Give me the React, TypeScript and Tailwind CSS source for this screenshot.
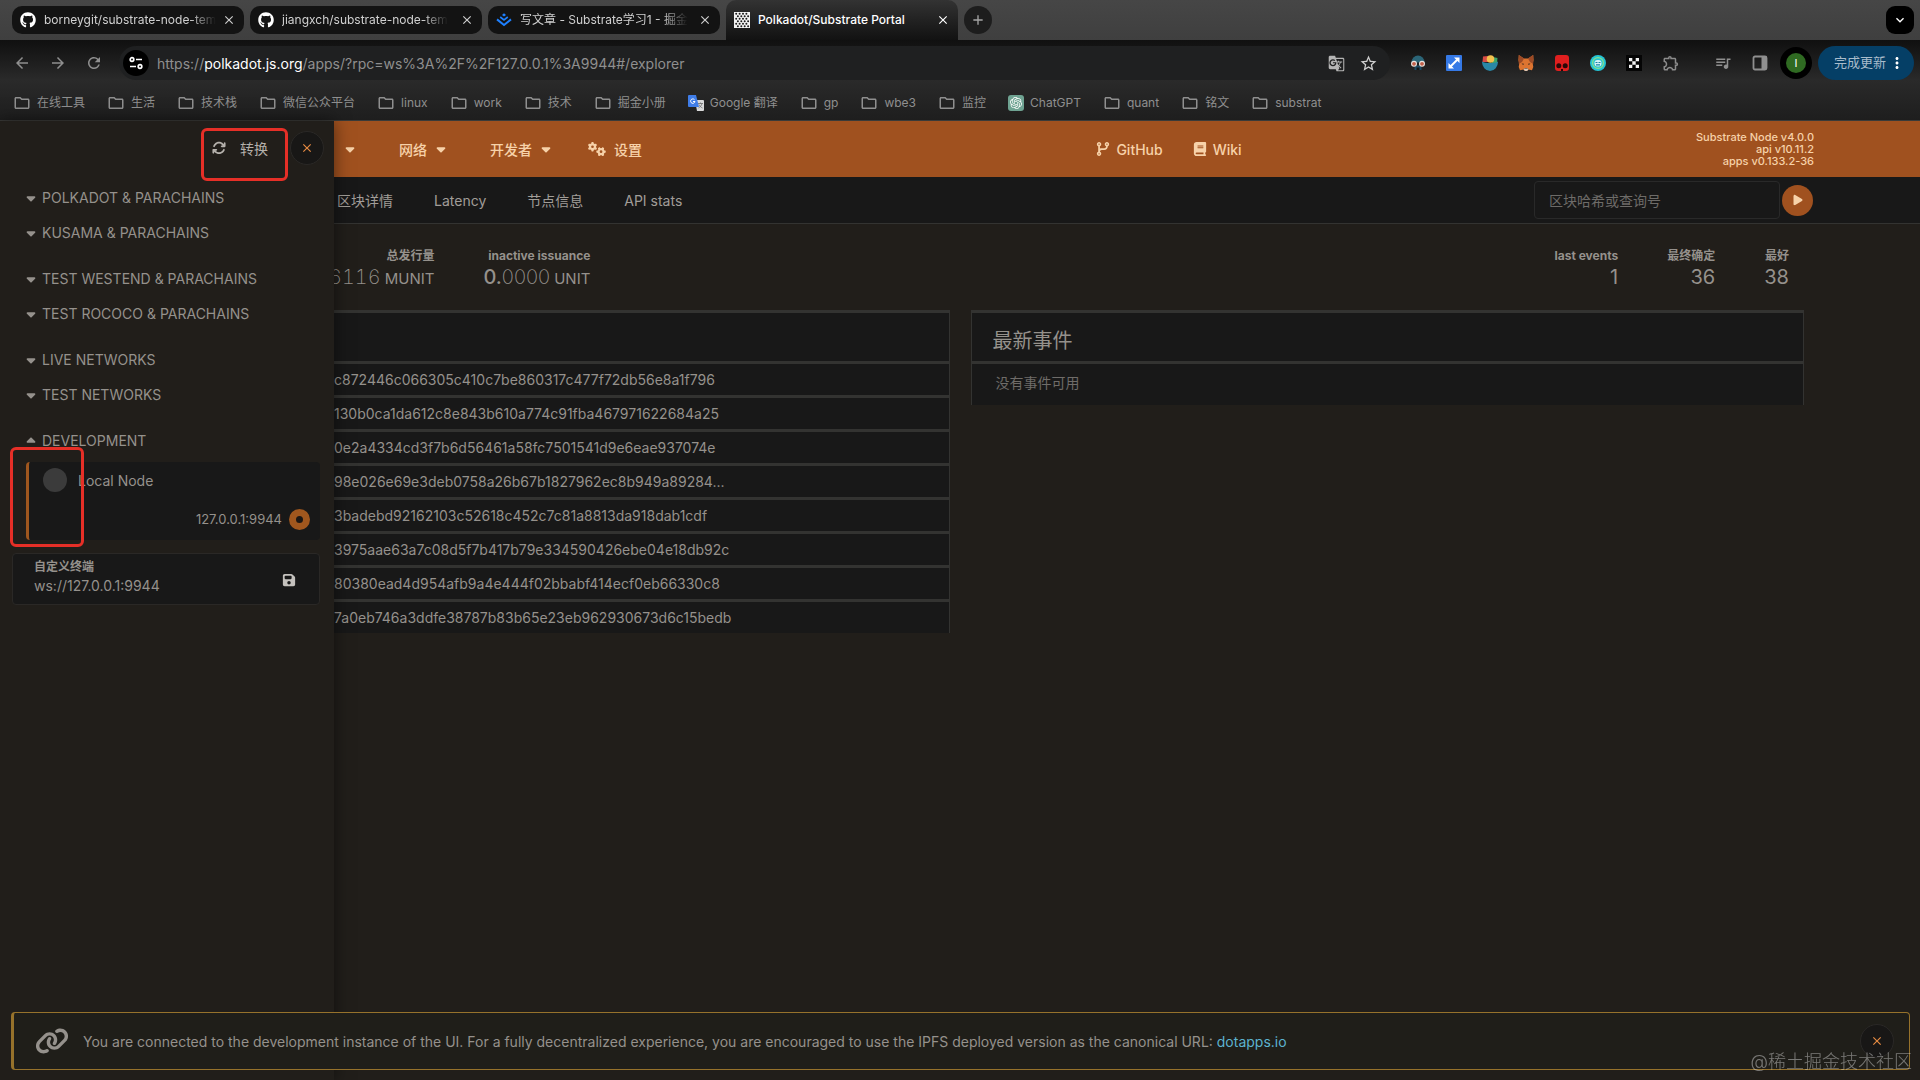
import type { ReactNode } from "react";
import {
  FaArrowsRotate,
  FaBook,
  FaCaretDown,
  FaCaretUp,
  FaCodeBranch,
  FaFloppyDisk,
  FaGears,
  FaGithub,
  FaLink,
  FaPlay,
} from "react-icons/fa6";
import {
  MdAdd,
  MdArrowBack,
  MdArrowForward,
  MdClose,
  MdGTranslate,
  MdKeyboardArrowDown,
  MdMoreVert,
  MdOutlineExtension,
  MdOutlineFolder,
  MdOutlineQueueMusic,
  MdOutlineStarBorder,
  MdRefresh,
} from "react-icons/md";
import { SiOpenai } from "react-icons/si";

const bookmarks = [
  { label: "在线工具" },
  { label: "生活" },
  { label: "技术栈" },
  { label: "微信公众平台" },
  { label: "linux" },
  { label: "work" },
  { label: "技术" },
  { label: "掘金小册" },
  { label: "Google 翻译", icon: "google" },
  { label: "gp" },
  { label: "wbe3" },
  { label: "监控" },
  { label: "ChatGPT", icon: "gpt" },
  { label: "quant" },
  { label: "铭文" },
  { label: "substrat" },
];

const networkGroups = [
  ["POLKADOT & PARACHAINS", "KUSAMA & PARACHAINS"],
  ["TEST WESTEND & PARACHAINS", "TEST ROCOCO & PARACHAINS"],
  ["LIVE NETWORKS", "TEST NETWORKS"],
];

const blockHashes = [
  "c872446c066305c410c7be860317c477f72db56e8a1f796",
  "130b0ca1da612c8e843b610a774c91fba467971622684a25",
  "0e2a4334cd3f7b6d56461a58fc7501541d9e6eae937074e",
  "98e026e69e3deb0758a26b67b1827962ec8b949a89284...",
  "3badebd92162103c52618c452c7c81a8813da918dab1cdf",
  "3975aae63a7c08d5f7b417b79e334590426ebe04e18db92c",
  "80380ead4d954afb9a4e444f02bbabf414ecf0eb66330c8",
  "7a0eb746a3ddfe38787b83b65e23eb962930673d6c15bedb",
];

function JuejinLogo() {
  return (
    <svg viewBox="0 0 16 16" className="h-4 w-4 shrink-0" fill="none" stroke="#1e80ff" strokeWidth="1.6">
      <path d="M8 1.2 10 2.9 8 4.5 6 2.9Z" fill="#1e80ff" stroke="none" />
      <path d="M4.2 5 8 8l3.8-3" />
      <path d="M1 7.4 8 13l7-5.6" strokeWidth="2" />
    </svg>
  );
}

function PortalLogo() {
  const dots: ReactNode[] = [];
  for (let row = 0; row < 6; row++) {
    for (let col = 0; col < 4; col++) {
      dots.push(
        <circle key={`${row}-${col}`} cx={2.2 + col * 3.4 + (row % 2) * 1.7} cy={1.8 + row * 2.5} r="1" fill="#1b1b1b" />
      );
    }
  }
  return (
    <svg viewBox="0 0 16 16" className="h-4 w-4 shrink-0">
      <rect width="16" height="16" fill="#f4f4f4" />
      {dots}
    </svg>
  );
}

function Tab({ icon, title, active }: { icon: ReactNode; title: string; active?: boolean }) {
  return (
    <div
      className={
        active
          ? "flex w-[232px] items-center rounded-t-[10px] bg-linear-to-b from-[#333333] to-[#121212] px-2 text-white"
          : "my-1.5 flex w-[232px] items-center rounded-[10px] bg-[#131313] px-2 text-[#d0d0d0]"
      }
    >
      {icon}
      <span
        className={
          active
            ? "ml-2 whitespace-nowrap font-medium"
            : "ml-2 whitespace-nowrap mask-r-from-85% mask-r-to-100%"
        }
      >
        {title}
      </span>
      <button aria-label="Close tab" className="ml-auto">
        <MdClose className="h-3.5 w-3.5" />
      </button>
    </div>
  );
}

function BookmarkIcon({ icon }: { icon?: string }) {
  if (icon === "google") {
    return (
      <svg viewBox="0 0 16 16" className="h-4 w-4">
        <path d="M7 5h8a1 1 0 0 1 1 1v9a1 1 0 0 1-1 1H9Z" fill="#d9d9d9" />
        <path d="M10 8.5h5M12.5 7.5v1M14 8.5c-.5 2-1.8 3.5-3.5 4.5M11 9.5c.6 1.5 2 2.8 3.5 3.5" stroke="#6b6b6b" strokeWidth=".8" fill="none" />
        <path d="M1 0h7l3 12H1a1 1 0 0 1-1-1V1a1 1 0 0 1 1-1Z" fill="#3f7de8" />
        <path d="M6.5 4.7A2.2 2.2 0 1 0 7 6.5H5" stroke="#fff" strokeWidth="1" fill="none" />
      </svg>
    );
  }
  if (icon === "gpt") {
    return (
      <span className="flex h-4 w-4 items-center justify-center rounded-[3px] bg-[#6fa392] text-white">
        <SiOpenai className="h-3 w-3" />
      </span>
    );
  }
  return <MdOutlineFolder className="h-[18px] w-[18px]" />;
}

function Extensions() {
  return (
    <div className="flex items-center gap-5">
      <svg viewBox="0 0 16 16" className="h-4 w-4">
        <path d="M1.5 7.5a6.5 7 0 0 1 13 0Z" fill="#2b6577" />
        <path d="M4.5 10.5h7V15h-7Z" fill="#1c4a63" />
        <path d="M6.5 12.5h3V15h-3Z" fill="#15181a" />
        <circle cx="4" cy="8.8" r="3" fill="#e9e4e0" />
        <circle cx="12" cy="8.8" r="3" fill="#e9e4e0" />
        <circle cx="4" cy="8.8" r="1.9" fill="#c1604a" />
        <circle cx="12" cy="8.8" r="1.9" fill="#c1604a" />
      </svg>
      <svg viewBox="0 0 16 16" className="h-4 w-4">
        <rect width="16" height="16" rx="1" fill="#3579e6" />
        <path d="M4.5 11.5 11.5 4.5" stroke="#fff" strokeWidth="2" />
        <path d="M8 2.5h5.5V8ZM2.5 8v5.5H8Z" fill="#fff" />
      </svg>
      <svg viewBox="0 0 16 16" className="h-4 w-4">
        <path d="M1 1.5 6 1v6H.5Z" fill="#d94c45" />
        <path d="m11 2 4.5 1-.5 5h-5Z" fill="#3ea66b" />
        <circle cx="8.5" cy="4" r="3.8" fill="#f2c14e" />
        <path d="M0 6.5c3 2 13 2 16 0A8 9.3 0 0 1 8 16 8 9.3 0 0 1 0 6.5Z" fill="#2a88a6" />
      </svg>
      <svg viewBox="0 0 16 16" className="h-4 w-4">
        <path d="M.8 0 6 3.5h4L15.2 0l.4 5-.8 4 .5 3-1.3 3.3-3.6-.8L9 16H7l-1.4-1.5-3.6.8L.7 12l.5-3-.8-4Z" fill="#dd7430" />
        <path d="m.8 0 5.2 3.5-2 3.5-3.2 2ZM15.2 0 10 3.5l2 3.5 3.2 2Z" fill="#9c4a26" />
        <path d="m3.5 8.5 2.5.3-.8 1.2ZM12.5 8.5l-2.5.3.8 1.2ZM6.5 13h3l-.5 1.5H7Z" fill="#2b2220" />
        <path d="m5.5 14.5 1-1h3l1 1L9 16H7Z" fill="#d8c4b4" />
      </svg>
      <svg viewBox="0 0 16 16" className="h-4 w-4">
        <rect x="1" width="14" height="16" rx="3" fill="#e01f1f" />
        <circle cx="4.8" cy="10.8" r="2.5" fill="#2a0808" />
        <circle cx="11.2" cy="10.8" r="2.5" fill="#2a0808" />
        <path d="M7 14h2v2H7Z" fill="#2a0808" />
      </svg>
      <svg viewBox="0 0 16 16" className="h-4 w-4">
        <circle cx="8" cy="8" r="8" fill="#25c4d4" />
        <circle cx="8" cy="8" r="5.4" fill="none" stroke="#8be08a" strokeWidth="1.2" />
        <rect x="4.5" y="5" width="7" height="6.5" rx="3" fill="#d4f1f6" />
        <path d="M5.5 7.5h2M8.5 7.5h2M6 9.8h4" stroke="#1786a5" strokeWidth="1.2" />
      </svg>
      <svg viewBox="0 0 16 16" className="h-4 w-4">
        <rect width="16" height="16" fill="#050505" />
        <path d="M3 3h3.3v3.3H3ZM9.7 3H13v3.3H9.7ZM6.3 6.3h3.4v3.4H6.3ZM3 9.7h3.3V13H3ZM9.7 9.7H13V13H9.7Z" fill="#f5f5f5" />
      </svg>
      <MdOutlineExtension className="h-[18px] w-[18px] text-[#8c8c8c]" />
    </div>
  );
}

function BrowserChrome() {
  return (
    <div className="text-[13px] text-[#8f8f8f]">
      <div className="flex h-10 items-stretch gap-1.5 bg-linear-to-b from-[#464646] to-[#3f3f3f] px-3 text-[12px]">
        <Tab icon={<FaGithub className="h-4 w-4 shrink-0 text-white" />} title="borneygit/substrate-node-tem" />
        <Tab icon={<FaGithub className="h-4 w-4 shrink-0 text-white" />} title="jiangxch/substrate-node-tem" />
        <Tab icon={<JuejinLogo />} title="写文章 - Substrate学习1 - 掘金" />
        <Tab icon={<PortalLogo />} title="Polkadot/Substrate Portal" active />
        <button aria-label="New tab" className="my-1.5 flex w-7 items-center justify-center rounded-full bg-[#1d1d1d] text-[#a5a5a5]">
          <MdAdd className="h-4 w-4" />
        </button>
        <button aria-label="Search tabs" className="my-1.5 -mr-1.5 ml-auto flex w-7 items-center justify-center rounded-[9px] bg-black text-white">
          <MdKeyboardArrowDown className="h-4 w-4" />
        </button>
      </div>

      <div className="bg-linear-to-b from-[#101010] via-[#2a2a2a] to-[#1e1e1e]">
        <div className="flex items-center py-1.5 pr-1.5 pl-[13px]">
          <button aria-label="Back"><MdArrowBack className="h-[18px] w-[18px]" /></button>
          <button aria-label="Forward" className="ml-[18px]"><MdArrowForward className="h-[18px] w-[18px]" /></button>
          <button aria-label="Reload" className="ml-[18px]"><MdRefresh className="h-[18px] w-[18px]" /></button>
          <div className="ml-4 flex h-[34px] flex-1 items-center rounded-full bg-[#1f2021] pr-3 pl-1">
            <span className="flex h-[26px] w-[26px] shrink-0 items-center justify-center rounded-full bg-black">
              <svg viewBox="0 0 14 14" className="h-3.5 w-3.5" fill="none" stroke="#fff" strokeWidth="1.7">
                <circle cx="3" cy="3.5" r="1.8" />
                <path d="M7 3.5h6M1 10.5h6" />
                <circle cx="11" cy="10.5" r="1.8" />
              </svg>
            </span>
            <div className="ml-2 flex-1 text-[14px] whitespace-nowrap">
              https://<span className="text-white">polkadot.js.org</span>
              /apps/?rpc=ws%3A%2F%2F127.0.0.1%3A9944#/explorer
            </div>
            <button aria-label="Translate"><MdGTranslate className="h-[17px] w-[17px] text-[#b5b5b5]" /></button>
            <button aria-label="Bookmark" className="ml-3.5"><MdOutlineStarBorder className="h-[19px] w-[19px] text-[#cfcfcf]" /></button>
          </div>
          <div className="mr-[34px] ml-5">
            <Extensions />
          </div>
          <MdOutlineQueueMusic className="h-[18px] w-[18px]" />
          <svg viewBox="0 0 16 16" className="ml-5 h-4 w-4">
            <rect x="1.5" y="1.5" width="13" height="13" rx="1.5" fill="none" stroke="currentColor" strokeWidth="1.8" />
            <path d="M9.5 2h5v12h-5Z" fill="currentColor" />
          </svg>
          <span className="ml-3 flex h-8 w-8 items-center justify-center rounded-full bg-black">
            <span className="flex h-5 w-5 items-center justify-center rounded-full bg-[#2f6a22] text-[11px] text-white">I</span>
          </span>
          <button className="ml-1.5 flex h-[34px] w-24 items-center justify-end gap-0.5 rounded-full bg-[#053f66] pr-2 text-[13px] text-[#a9bccb]">
            完成更新
            <MdMoreVert className="h-[18px] w-[18px] text-white" />
          </button>
        </div>
        <div className="flex h-[34px] items-center gap-[22px] px-[13px] text-[12px]">
          {bookmarks.map((b) => (
            <a key={b.label} href="#" className="flex items-center gap-1.5 whitespace-nowrap">
              <BookmarkIcon icon={b.icon} />
              {b.label}
            </a>
          ))}
        </div>
      </div>
    </div>
  );
}

function Sidebar() {
  return (
    <aside className="absolute inset-y-0 left-0 z-10 w-[334px] bg-[#211e1a] text-[14px] text-[#95918c] shadow-[0_0_16px_rgba(0,0,0,0.5)]">
      <div className="flex items-center justify-end gap-[22px] pt-2.5 pr-2.5">
        <button className="flex items-center gap-3.5 text-[#b5b1ac]">
          <FaArrowsRotate className="h-3.5 w-3.5" />
          转换
        </button>
        <button aria-label="Close" className="flex h-[34px] w-[34px] items-center justify-center rounded-full border border-[#2a2826] bg-[#181716] text-[#e78b42]">
          <MdClose className="h-3.5 w-3.5" />
        </button>
      </div>

      <div className="mt-[15px] flex flex-col gap-[11px]">
        {networkGroups.map((group) => (
          <div key={group[0]}>
            {group.map((name) => (
              <button key={name} className="flex h-[35px] items-center gap-[5px] pl-[25px]">
                <FaCaretDown className="w-3" />
                {name}
              </button>
            ))}
          </div>
        ))}
        <div>
          <button className="flex h-[35px] items-center gap-[5px] pl-[25px]">
            <FaCaretUp className="w-3" />
            DEVELOPMENT
          </button>
          <div className="mt-1 mr-3.5 ml-[26px] rounded-sm border-l-[3px] border-[#a0571e] bg-[#181818] pt-1.5 pr-2.5 pb-2.5 pl-3.5">
            <div className="flex items-center gap-[11px]">
              <span className="h-6 w-6 rounded-full bg-[#3b3b3b]" />
              Local Node
            </div>
            <label className="mt-[17px] flex items-center justify-end gap-[7px] text-[13px]">
              127.0.0.1:9944
              <input
                type="radio"
                defaultChecked
                className="h-[21px] w-[21px] appearance-none rounded-full border-[7px] border-[#a0571e] bg-[#1c1714]"
              />
            </label>
          </div>
        </div>
      </div>

      <div className="mt-[13px] mr-3.5 ml-3 flex items-center rounded-sm border border-[#2a2826] bg-[#181818] pt-1 pr-[23px] pb-2 pl-[21px]">
        <div className="min-w-0 flex-1">
          <label htmlFor="endpoint" className="block text-[12px] leading-[18px] font-bold">
            自定义终端
          </label>
          <input id="endpoint" defaultValue="ws://127.0.0.1:9944" className="block w-full bg-transparent leading-5" />
        </div>
        <button aria-label="Save endpoint" className="mt-1.5 text-[#c4c1bd]">
          <FaFloppyDisk className="h-3.5 w-3.5" />
        </button>
      </div>

      <div className="absolute top-[7px] left-[201px] h-[53px] w-[87px] rounded-md border-[3px] border-[#e62f27]" />
      <div className="absolute top-[326px] left-[10px] h-[100px] w-[74px] rounded-md border-[3px] border-[#e62f27]" />
    </aside>
  );
}

function TopBar() {
  return (
    <header className="flex h-14 items-center justify-between bg-[#a0511f] pr-[106px] pl-[344px] text-[14px] font-medium text-[#f7d2a9]">
      <nav className="flex items-center">
        <button aria-label="More"><FaCaretDown className="w-3" /></button>
        <button className="ml-[43px] flex items-center gap-2">
          网络 <FaCaretDown className="w-3" />
        </button>
        <button className="ml-[43px] flex items-center gap-2">
          开发者 <FaCaretDown className="w-3" />
        </button>
        <button className="ml-9 flex items-center gap-2">
          <FaGears className="h-4 w-[18px]" /> 设置
        </button>
      </nav>
      <div className="flex items-center gap-[30px]">
        <a href="#" className="flex items-center gap-1.5">
          <FaCodeBranch className="h-3.5 w-3.5" /> GitHub
        </a>
        <a href="#" className="flex items-center gap-1.5">
          <FaBook className="h-3.5 w-3.5" /> Wiki
        </a>
      </div>
      <div className="text-right text-[11px] leading-3">
        <div>Substrate Node v4.0.0</div>
        <div>api v10.11.2</div>
        <div>apps v0.133.2-36</div>
      </div>
    </header>
  );
}

function SubNav() {
  return (
    <div className="flex h-[47px] items-center border-b border-[#333331] bg-[#181818] pr-[107px] pl-[337px] text-[14px]">
      <nav className="flex flex-1 gap-[41px] text-[#a19d98]">
        <a href="#">区块详情</a>
        <a href="#">Latency</a>
        <a href="#">节点信息</a>
        <a href="#">API stats</a>
      </nav>
      <input
        aria-label="区块哈希或查询号"
        placeholder="区块哈希或查询号"
        className="h-[38px] w-[246px] rounded-sm border border-[#292929] bg-transparent px-3.5 placeholder:text-[#6d6b68]"
      />
      <button aria-label="Search" className="ml-0.5 flex h-[31px] w-[31px] items-center justify-center rounded-full bg-[#a0511f] text-[#f7d2a9]">
        <FaPlay className="h-3 w-3" />
      </button>
    </div>
  );
}

function Stat({ label, children }: { label: string; children: ReactNode }) {
  return (
    <div className="text-right">
      <div className="text-[12px] leading-4 font-bold">{label}</div>
      <div className="text-[20px] leading-[26px]">{children}</div>
    </div>
  );
}

function Summary() {
  return (
    <section className="flex justify-between pt-6 pr-[131px] pb-[18px] pl-[329px]">
      <div className="flex gap-[49px]">
        <Stat label="总发行量">
          <span className="font-extralight tabular-nums">6116</span>
          <span className="ml-1 text-[15px]">MUNIT</span>
        </Stat>
        <Stat label="inactive issuance">
          <span className="font-medium">0.</span>
          <span className="font-extralight">0000</span>
          <span className="ml-1 text-[15px]">UNIT</span>
        </Stat>
      </div>
      <div className="flex gap-[49px]">
        <Stat label="last events">1</Stat>
        <Stat label="最终确定">36</Stat>
        <Stat label="最好">38</Stat>
      </div>
    </section>
  );
}

function Tables() {
  return (
    <section className="grid grid-cols-2 items-start gap-[21px] px-[116px]">
      <table className="w-full border-separate border-spacing-0 border-r border-[#333331] bg-[#181818] text-left text-[14px]">
        <thead>
          <tr>
            <th className="h-[51px] border-t-[3px] border-[#333331]" />
          </tr>
        </thead>
        <tbody>
          {blockHashes.map((hash) => (
            <tr key={hash}>
              <td className="h-[34px] border-t-[3px] border-[#333331] pl-[218px]">{hash}</td>
            </tr>
          ))}
        </tbody>
      </table>
      <table className="w-full border-separate border-spacing-0 border-x border-[#333331] bg-[#181818] text-left">
        <thead>
          <tr>
            <th className="h-[51px] border-t-[3px] border-[#333331] pt-2 pl-[21px] text-[20px] leading-6 font-normal">最新事件</th>
          </tr>
        </thead>
        <tbody>
          <tr>
            <td className="h-[44px] border-t-[3px] border-[#333331] pb-1 pl-6 text-[14px] text-[#6f6c69]">没有事件可用</td>
          </tr>
        </tbody>
      </table>
    </section>
  );
}

export default function App() {
  return (
    <div className="flex min-h-screen flex-col bg-[#211e1a] font-['Inter','Noto_Sans_CJK_SC',sans-serif]">
      <BrowserChrome />
      <div className="relative flex-1 border-t border-[#3a3a38] text-[#95918c]">
        <Sidebar />
        <main>
          <TopBar />
          <SubNav />
          <Summary />
          <Tables />
        </main>
      </div>

      <div className="fixed right-2.5 bottom-2.5 left-[11px] z-20 flex h-[58px] items-center rounded border border-l-[3px] border-[#96722b] bg-[#1f1e19] pr-[15px] pl-[21px] text-[14px] text-[#95918c]">
        <FaLink className="h-[34px] w-[34px]" />
        <p className="ml-3.5 flex-1">
          You are connected to the development instance of the UI. For a fully decentralized experience, you are encouraged to use the IPFS deployed version as the canonical URL:{" "}
          <a href="#" className="text-[#5cb3cf]">dotapps.io</a>
        </p>
        <button aria-label="Dismiss" className="flex h-[34px] w-[34px] items-center justify-center rounded-full border border-[#2a2826] bg-[#181716] text-[#e78b42]">
          <MdClose className="h-3.5 w-3.5" />
        </button>
      </div>
      <div className="fixed right-2 bottom-1.5 z-30 text-[18px] leading-6 font-light text-white/40">@稀土掘金技术社区</div>
    </div>
  );
}
